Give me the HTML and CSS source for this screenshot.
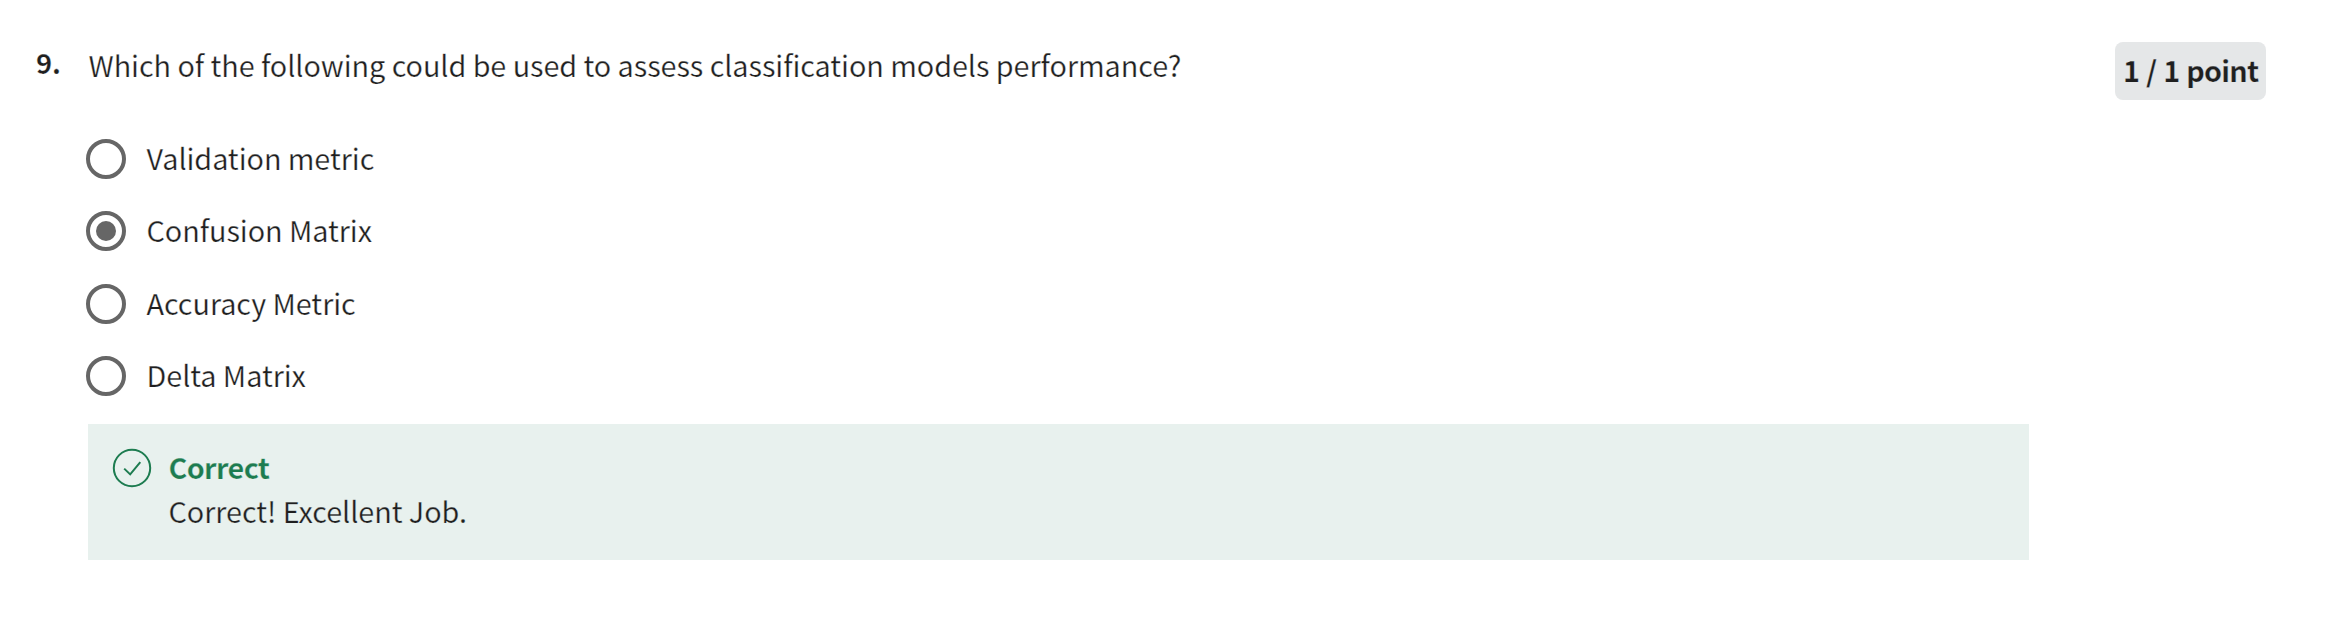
FILE: index.html
```html
<!DOCTYPE html>
<html lang="en">
<head>
<meta charset="utf-8">
<title>Quiz question</title>
<link rel="stylesheet" href="styles.css">
</head>
<body>
<main class="question">
  <div class="number">9.</div>
  <section class="content">
    <p class="prompt">Which of the following could be used to assess classification models performance?</p>
    <div class="options">
      <div class="option"><span class="radio"></span><span class="label">Validation metric</span></div>
      <div class="option"><span class="radio checked"></span><span class="label">Confusion Matrix</span></div>
      <div class="option"><span class="radio"></span><span class="label">Accuracy Metric</span></div>
      <div class="option"><span class="radio"></span><span class="label">Delta Matrix</span></div>
    </div>
    <div class="feedback">
      <svg class="icon" viewBox="0 0 40 40" width="40" height="40" fill="none" stroke="#1d7c50" stroke-width="2">
        <circle cx="20" cy="20" r="18.2"/>
        <path d="M12.2 20.6 18.2 26.4 28.3 14.2"/>
      </svg>
      <div class="message">
        <div class="verdict">Correct</div>
        <div class="detail">Correct! Excellent Job.</div>
      </div>
    </div>
  </section>
  <div class="points">1 / 1 point</div>
</main>
</body>
</html>
```
FILE: styles.css
```css
body {
  margin: 0;
  background: #fff;
  color: #1f1f1f;
  font-family: "Noto Sans CJK SC", "Noto Sans CJK JP", "Open Sans", sans-serif;
  font-size: 28.8px;
  line-height: 40px;
  letter-spacing: -0.07px;
  -webkit-text-stroke: 0.25px #fff;
}
.question {
  display: flex;
  align-items: flex-start;
  box-sizing: border-box;
  width: 2351px;
  height: 622px;
  padding: 42px 85px 0 36px;
  white-space: nowrap;
}
.number {
  width: 52px;
  font-size: 27.4px;
  font-weight: 700;
  line-height: 40px;
}
.content {
  width: 1941px;
}
.prompt {
  margin: 3px 0 0;
  padding-left: 0.5px;
}
.options {
  display: grid;
  grid-template-rows: 72px 72px 74px 70px;
  margin: 38px 0 0 -2px;
}
.option {
  display: flex;
  align-items: center;
  gap: 20.5px;
}
.radio {
  position: relative;
  box-sizing: border-box;
  width: 40px;
  height: 40px;
  border: 4px solid #666;
  border-radius: 50%;
}
.checked::after {
  content: "";
  position: absolute;
  inset: 6px;
  border-radius: 50%;
  background: #666;
}
.label {
  padding-bottom: 2px;
}
.feedback {
  display: flex;
  box-sizing: border-box;
  height: 136px;
  margin-top: 13px;
  padding: 24px;
  gap: 16.5px;
  background: #e8f1ee;
  -webkit-text-stroke-color: #e8f1ee;
}
.icon {
  flex: none;
}
.message {
  margin-top: -3px;
  line-height: 44px;
}
.verdict {
  color: #1d7c50;
  font-weight: 700;
  letter-spacing: -0.65px;
}
.points {
  box-sizing: border-box;
  width: 151px;
  height: 58px;
  margin-left: auto;
  padding: 8px 8px;
  border-radius: 8px;
  background: #e5e7e8;
  font-weight: 700;
  letter-spacing: -0.75px;
  word-spacing: 1px;
  -webkit-text-stroke-color: #e5e7e8;
}
```
